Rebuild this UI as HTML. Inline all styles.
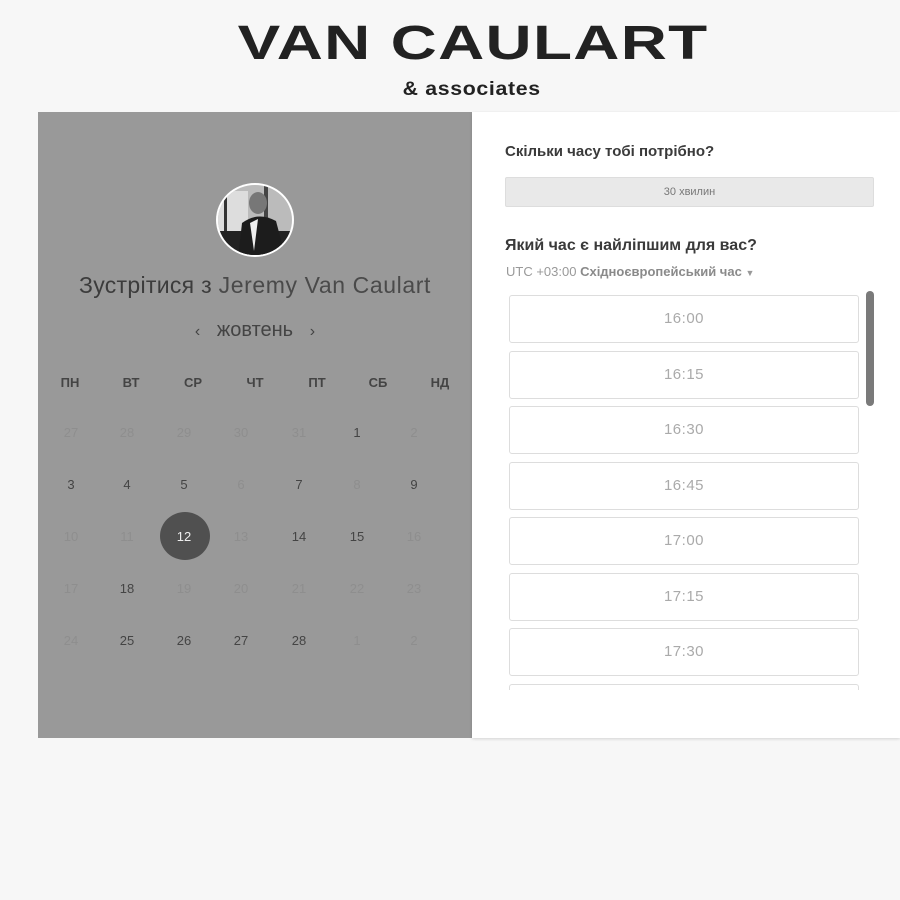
<!DOCTYPE html>
<html><head><meta charset="utf-8"><style>
*{margin:0;padding:0;box-sizing:border-box}
body{width:900px;height:900px;background:#f7f7f7;font-family:"Liberation Sans",sans-serif;position:relative;overflow:hidden}
.abs{position:absolute}
.logo{left:23px;width:900px;top:16px;text-align:center;height:60px}
.logo span{display:inline-block;font-weight:bold;font-size:48px;color:#222;transform:scaleX(1.33);letter-spacing:1px;line-height:56px}
.assoc{left:22px;width:900px;top:79px;text-align:center;height:24px}
.assoc span{display:inline-block;font-weight:bold;font-size:19px;color:#222;transform:scaleX(1.12);letter-spacing:0.6px}
.left{left:38px;top:112px;width:434px;height:626px;background:#999}
.right{left:472px;top:112px;width:428px;height:626px;background:#fff;box-shadow:0 1px 3px rgba(0,0,0,.15)}
.c{transform:translateX(-50%);text-align:center;white-space:nowrap}
.hd{font-weight:bold;font-size:13px;color:#444;top:375px}
.d{font-size:13px;top:425px}
.slot{left:509px;width:350px;height:48px;border:1px solid #ddd;border-radius:3px;background:#fff;text-align:center;line-height:46px;font-size:15px;color:#aaa;letter-spacing:.5px}
</style></head><body>
<div class="abs logo"><span>VAN CAULART</span></div>
<div class="abs assoc"><span>&amp; associates</span></div>
<div class="abs left"></div>
<div class="abs right"></div>

<svg class="abs" style="left:214px;top:181px" width="82" height="78" viewBox="0 0 82 78">
<defs><clipPath id="cp"><ellipse cx="41" cy="39" rx="37" ry="35"/></clipPath></defs>
<ellipse cx="41" cy="39" rx="39" ry="37" fill="#fff"/>
<g clip-path="url(#cp)">
<rect width="82" height="78" fill="#bbb"/>
<rect x="4" y="10" width="30" height="40" fill="#ddd"/>
<rect x="10" y="5" width="3" height="50" fill="#333"/>
<rect x="50" y="5" width="4" height="50" fill="#444"/>
<rect x="0" y="50" width="82" height="28" fill="#222"/>
<ellipse cx="44" cy="22" rx="9" ry="11" fill="#777"/>
<path d="M24 78 L28 42 Q44 30 62 40 L72 78 Z" fill="#1c1c1c"/>
<path d="M36 42 L44 38 L40 70 Z" fill="#eee"/>
</g>
</svg>

<div class="abs c" style="left:255px;top:272px;font-size:23px;color:#3c3c3c;letter-spacing:.3px">Зустрітися з <span style="color:#4a4a4a;letter-spacing:.6px">Jeremy Van Caulart</span></div>
<div class="abs c" style="left:255px;top:319px;font-size:20px;color:#444"><span style="font-size:16px">‹</span>&nbsp;&nbsp;&nbsp;жовтень&nbsp;&nbsp;&nbsp;<span style="font-size:16px">›</span></div>

<div class="abs c hd" style="left:70px">ПН</div>
<div class="abs c hd" style="left:131px">ВТ</div>
<div class="abs c hd" style="left:193px">СР</div>
<div class="abs c hd" style="left:255px">ЧТ</div>
<div class="abs c hd" style="left:317px">ПТ</div>
<div class="abs c hd" style="left:378px">СБ</div>
<div class="abs c hd" style="left:440px">НД</div>

<div class="abs" style="left:160px;top:512px;width:50px;height:48px;border-radius:50%;background:#505050"></div>

<div id="cal"></div>
<script>
var rows=[[["27",0],["28",0],["29",0],["30",0],["31",0],["1",1],["2",0]],
[["3",1],["4",1],["5",1],["6",0],["7",1],["8",0],["9",1]],
[["10",0],["11",0],["12",2],["13",0],["14",1],["15",1],["16",0]],
[["17",0],["18",1],["19",0],["20",0],["21",0],["22",0],["23",0]],
[["24",0],["25",1],["26",1],["27",1],["28",1],["1",0],["2",0]]];
var xs=[71,127,184,241,299,357,414],h="";
rows.forEach(function(r,i){r.forEach(function(d,j){
var col=d[1]==2?"#eee":(d[1]?"#444":"#8e8e8e");
h+='<div class="abs c d" style="left:'+xs[j]+'px;top:'+(425+i*52)+'px;color:'+col+'">'+d[0]+'</div>';});});
document.getElementById('cal').innerHTML=h;
</script>

<div class="abs" style="left:505px;top:143px;font-weight:bold;font-size:15px;color:#3a3a3a">Скільки часу тобі потрібно?</div>
<div class="abs" style="left:505px;top:177px;width:369px;height:30px;background:#e9e9e9;border:1px solid #ddd;border-radius:2px;text-align:center;line-height:28px;font-size:11px;color:#777">30 хвилин</div>
<div class="abs" style="left:505px;top:237px;font-weight:bold;font-size:16px;color:#3a3a3a">Який час є найліпшим для вас?</div>
<div class="abs" style="left:506px;top:264px;font-size:13px;color:#999">UTC +03:00 <b style="color:#8a8a8a">Східноєвропейський час</b> <span style="font-size:9px">▼</span></div>

<div class="abs" style="left:500px;top:290px;width:370px;height:400px;overflow:hidden">
<div style="position:relative;left:-500px;top:-290px">
<div class="abs slot" style="top:295px">16:00</div>
<div class="abs slot" style="top:351px">16:15</div>
<div class="abs slot" style="top:406px">16:30</div>
<div class="abs slot" style="top:462px">16:45</div>
<div class="abs slot" style="top:517px">17:00</div>
<div class="abs slot" style="top:573px">17:15</div>
<div class="abs slot" style="top:628px">17:30</div>
<div class="abs slot" style="top:684px">17:45</div>
</div></div>
<div class="abs" style="left:866px;top:291px;width:8px;height:115px;border-radius:4px;background:#7a7a7a"></div>
</body></html>
